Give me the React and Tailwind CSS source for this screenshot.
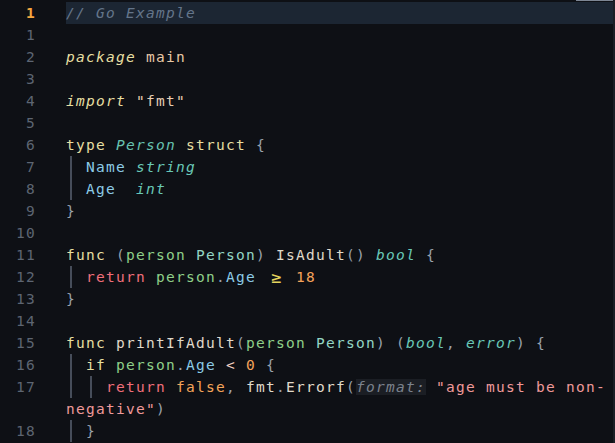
import React from 'react';

const C = {
  kw: 'text-[#e6dfa2]',
  kwi: 'text-[#e6dfa2] italic',
  cm: 'text-[#64758a] italic',
  pkg: 'text-[#e8c8a6]',
  str: 'text-[#e6cdb3]',
  typeDef: 'text-[#67c2b0] italic',
  field: 'text-[#8ccbe6]',
  builtin: 'text-[#69c8b7] italic',
  punc: 'text-[#9aa1ab]',
  param: 'text-[#8fcf89]',
  typeRef: 'text-[#93d5c4]',
  fn: 'text-[#e0dacb]',
  ret: 'text-[#f06f7b]',
  op: 'text-[#e5d45e]',
  lt: 'text-[#f1d2c4]',
  num: 'text-[#f4a35b]',
  bool: 'text-[#f4a55a]',
  errStr: 'text-[#ee9a9a]',
};

// each line: number, indent guides, tokens
const LINES = [
  { n: '1', active: true, tokens: [['// Go Example', C.cm]] },
  { n: '1', tokens: [] },
  { n: '2', tokens: [['package', C.kwi], [' '], ['main', C.pkg]] },
  { n: '3', tokens: [] },
  { n: '4', tokens: [['import', C.kwi], [' '], ['"fmt"', C.str]] },
  { n: '5', tokens: [] },
  { n: '6', tokens: [['type', C.kw], [' '], ['Person', C.typeDef], [' '], ['struct', C.kw], [' '], ['{', C.punc]] },
  { n: '7', guides: 1, tokens: [['Name', C.field], [' '], ['string', C.builtin]] },
  { n: '8', guides: 1, tokens: [['Age', C.field], ['  '], ['int', C.builtin]] },
  { n: '9', tokens: [['}', C.punc]] },
  { n: '10', tokens: [] },
  { n: '11', tokens: [['func', C.kw], [' '], ['(', C.punc], ['person', C.param], [' '], ['Person', C.typeRef], [')', C.punc], [' '], ['IsAdult', C.fn], ['()', C.punc], [' '], ['bool', C.builtin], [' '], ['{', C.punc]] },
  { n: '12', guides: 1, tokens: [['return', C.ret], [' '], ['person', C.param], ['.', C.punc], ['Age', C.field], [' '], ['≥', C.op, 'lig'], [' '], ['18', C.num]] },
  { n: '13', tokens: [['}', C.punc]] },
  { n: '14', tokens: [] },
  { n: '15', tokens: [['func', C.kw], [' '], ['printIfAdult', C.fn], ['(', C.punc], ['person', C.param], [' '], ['Person', C.typeRef], [')', C.punc], [' '], ['(', C.punc], ['bool', C.builtin], [',', C.punc], [' '], ['error', C.builtin], [')', C.punc], [' '], ['{', C.punc]] },
  { n: '16', guides: 1, tokens: [['if', C.kw], [' '], ['person', C.param], ['.', C.punc], ['Age', C.field], [' '], ['<', C.lt], [' '], ['0', C.num], [' '], ['{', C.punc]] },
  { n: '17', guides: 2, tokens: [['return', C.ret], [' '], ['false', C.bool], [',', C.punc], [' '], ['fmt', C.fn], ['.', C.punc], ['Errorf', C.fn], ['(', C.punc], ['format:', 'hint'], [' '], ['"age must be non-', C.errStr]] },
  { n: '', tokens: [['negative"', C.errStr], [')', C.punc]] },
  { n: '18', guides: 1, tokens: [['}', C.punc]] },
];

function Token({ t }) {
  const [text, cls, kind] = t;
  if (kind === 'lig') {
    return <span className={`inline-block w-[20px] text-center tracking-normal text-[17px] leading-[22px] align-top ${cls}`}>{text}</span>;
  }
  if (cls === 'hint') {
    return <span className="bg-[#1b1e24] text-[#7b828d] italic">{text}</span>;
  }
  return <span className={cls || ''}>{text}</span>;
}

export default function App() {
  return (
    <div
      className="relative w-[615px] h-[443px] bg-[#0e1015] overflow-hidden pt-[2px] border-r-2 border-[#1b1e25]"
      style={{ fontFamily: '"DejaVu Sans Mono", monospace' }}
    >
      {/* scrollbar thumb */}
      <div className="absolute top-0 right-0 w-[37px] h-[1px] bg-[#7d8694]" />
      {LINES.map((line, i) => (
        <div key={i} className="flex h-[22px] text-[14.5px] leading-[22px] tracking-[1.27px] whitespace-pre">
          <div
            className={`w-[66px] shrink-0 text-right pr-[30px] ${
              line.active ? 'text-[#f5a63f] font-bold' : 'text-[#5d6572]'
            }`}
          >
            {line.n}
          </div>
          <div className={`flex-1 flex ${line.active ? 'bg-[#1c2633]' : ''}`}>
            {Array.from({ length: line.guides || 0 }).map((_, g) => (
              <div key={g} className="w-[20px] shrink-0 self-stretch">
                <div className="ml-[4px] w-[2px] h-full bg-[#464d5a]" />
              </div>
            ))}
            <div>
              {line.tokens.map((t, j) => (
                <Token key={j} t={t} />
              ))}
            </div>
          </div>
        </div>
      ))}
    </div>
  );
}
